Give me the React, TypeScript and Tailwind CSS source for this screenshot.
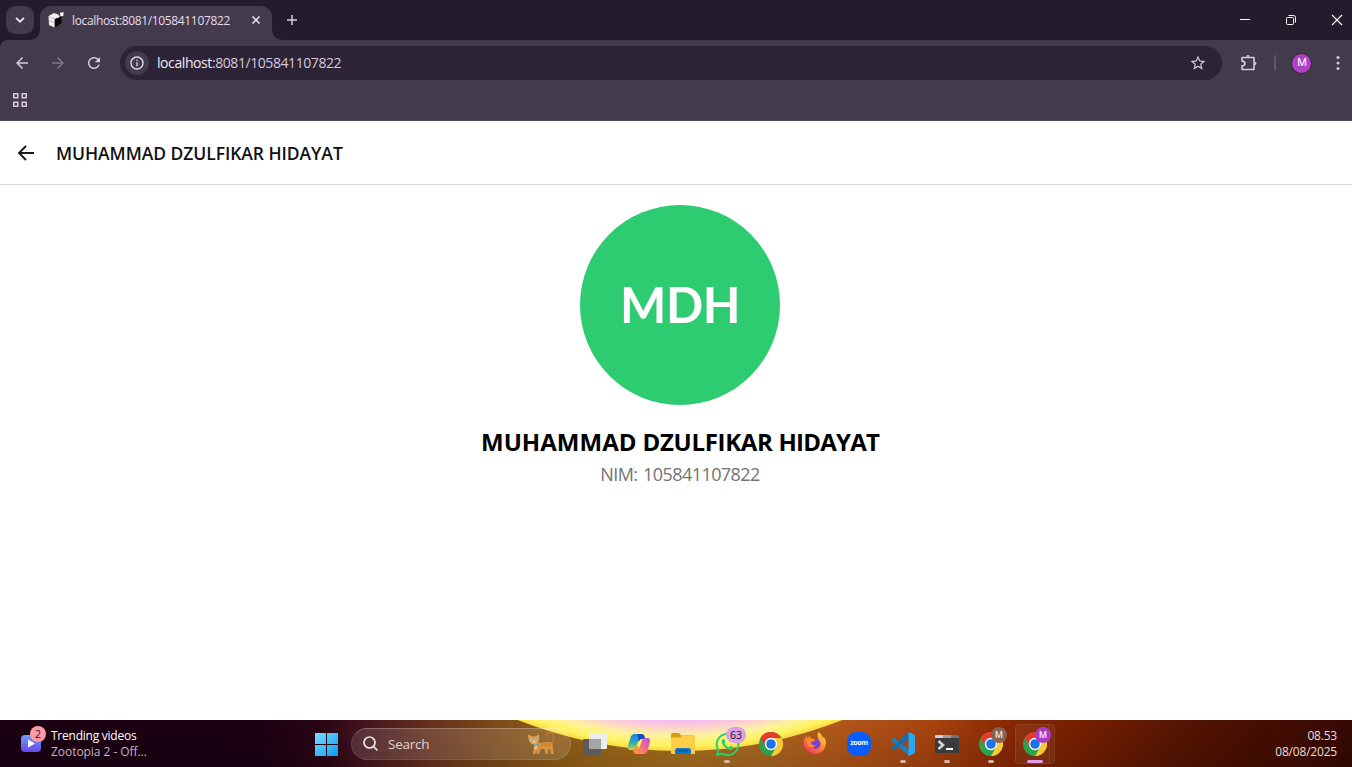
import type { ReactNode } from "react";
import { FaWhatsapp } from "react-icons/fa";
import { MdArrowBack, MdArrowForward, MdOutlineInfo, MdRefresh, MdStarBorder } from "react-icons/md";

function Favicon() {
  return (
    <svg width="16" height="16" viewBox="0 0 16 16">
      <path d="M0.500 4 6 1l4.500 1.500-.5 3-3 1.500-.5 8.500L1 13z" fill="#f1eef4" />
      <path d="M6.500 7.500 9.500 6l1.500-2.500L13.500 5v6L7 15.800z" fill="#08070a" />
      <path d="M0.800 4.500 6.500 6.800 10 5M6.500 6.800V15M1 8.500l5.500 2.300" stroke="#a39fa9" strokeWidth="0.600" fill="none" />
      <path d="M12 .8 15.500 0v3.500L12.500 4.500zM9 4l2.500-.8v2L9 6z" fill="#fff" />
    </svg>
  );
}

function TabStrip() {
  return (
    <div className="flex h-10 bg-[#241b2d] text-[#e6dcec]">
      <div className="flex w-8.5 justify-end pt-1.5">
        <button className="flex h-7 w-7 items-center justify-center rounded-[9px] bg-[#433a4b]">
          <svg width="10" height="6" viewBox="0 0 10 6" fill="none" stroke="#f0e8f5" strokeWidth="1.700"><path d="M1 .8 5 4.700 9 .8" /></svg>
        </button>
      </div>
      <div className="flex w-1.5 items-end">
        <svg className="-ml-1 shrink-0" width="10" height="10" viewBox="0 0 10 10"><path d="M10 0v10H0A10 10 0 0 0 10 0z" fill="#433a4b" /></svg>
      </div>
      <div className="mt-1.5 flex w-58 items-center rounded-t-[10px] bg-[#433a4b] pr-2.5 pb-1.5 pl-2">
        <Favicon />
        <span className="ml-2 flex-1 pt-px text-[12px] tracking-[-0.360px] whitespace-nowrap">localhost:8081/105841107822</span>
        <svg width="12" height="12" viewBox="0 0 12 12" stroke="#f0e8f5" strokeWidth="1.500"><path d="M2.500 2.500 9.500 9.500M9.500 2.500 2.500 9.500" /></svg>
      </div>
      <div className="flex items-end">
        <svg width="10" height="10" viewBox="0 0 10 10"><path d="M0 0v10h10A10 10 0 0 1 0 0z" fill="#433a4b" /></svg>
      </div>
      <div className="flex w-5 items-center justify-center">
        <svg width="12" height="12" viewBox="0 0 12 12" stroke="#d8c9e2" strokeWidth="1.500"><path d="M6 1v10M1 6h10" /></svg>
      </div>
      <div className="ml-auto flex items-center gap-[34px] pr-[9px] text-white">
        <svg width="12" height="12" viewBox="0 0 12 12" stroke="currentColor"><path d="M1 5.500h10" /></svg>
        <svg width="12" height="12" viewBox="0 0 12 12" fill="none" stroke="currentColor"><rect x="1.500" y="3.500" width="7" height="7" rx="1" /><path d="M3.500 1.500h5a2 2 0 0 1 2 2v5" /></svg>
        <svg width="12" height="12" viewBox="0 0 12 12" stroke="currentColor" strokeWidth="1.100"><path d="M1 1 11 11M11 1 1 11" /></svg>
      </div>
    </div>
  );
}

function Toolbar() {
  return (
    <div className="bg-[#241b2d]">
      <div className="flex h-[81px] flex-col rounded-tl-lg border-b border-[#52485a] bg-[#433a4b] pt-1.5">
        <div className="flex h-[34px] items-center text-[#d8c9e2]">
          <MdArrowBack className="ml-[13px] shrink-0" size={18} />
          <MdArrowForward className="ml-[18px] shrink-0 text-[#81768a]" size={18} />
          <MdRefresh className="ml-[18px] shrink-0" size={18} />
          <div className="ml-[17px] flex h-[34px] w-[1102px] items-center rounded-full bg-[#2c2336] px-[5px]">
            <div className="flex h-6 w-6 items-center justify-center rounded-full bg-[#433a4b]">
              <MdOutlineInfo className="text-[#e6dcec]" size={16} />
            </div>
            <span className="ml-2 text-[14px] leading-5 tracking-[-0.420px] text-[#d5c8de]"><span className="text-[#f1e9f6]">localhost</span>:8081/105841107822</span>
            <MdStarBorder className="mr-[10px] ml-auto" size={18} />
          </div>
          <svg className="ml-[18px]" width="18" height="18" viewBox="0 0 18 18" fill="none" stroke="currentColor" strokeWidth="1.600" strokeLinejoin="round">
            <path d="M2 3.500h12v12H2v-3.600q3-.2 3-2.400t-3-2.400z" />
            <path d="M6.300 2.800a1.700 1.700 0 0 1 3.400 0zM14.800 7.800a1.700 1.700 0 0 1 0 3.400z" fill="currentColor" stroke="none" />
          </svg>
          <div className="ml-4 h-4 w-0.5 rounded bg-[#61566a]" />
          <div className="ml-[15px] flex h-[21px] w-[21px] items-center justify-center rounded-full border border-[#2b2730] bg-[#b043c4] pt-px pl-px font-[Roboto] text-[11px] text-white">M</div>
          <svg className="ml-6" width="4" height="16" viewBox="0 0 4 16" fill="currentColor"><circle cx="2" cy="2.500" r="1.500" /><circle cx="2" cy="8" r="1.500" /><circle cx="2" cy="13.500" r="1.500" /></svg>
        </div>
        <svg className="mt-3 ml-3" width="16" height="16" viewBox="0 0 16 16" fill="none" stroke="#d8c9e2" strokeWidth="1.500">
          <path d="M1.800 1.800h4v4h-4zM10.200 1.800h4v4h-4zM1.800 10.200h4v4h-4zM10.200 10.200h4v4h-4z" />
        </svg>
      </div>
    </div>
  );
}

function ProfilePage() {
  return (
    <div className="flex flex-1 flex-col bg-white">
      <header className="flex h-16 items-center border-b border-[#d8d8d8] pl-4">
        <svg width="20" height="20" viewBox="0 0 20 20" fill="none" stroke="#18181a" strokeWidth="1.900"><path d="M18 10H3M10 3 3 10l7 7" /></svg>
        <h1 className="ml-5 text-[17.500px] leading-6 font-semibold tracking-[-0.060px] text-[#101012]">MUHAMMAD DZULFIKAR HIDAYAT</h1>
      </header>
      <main className="flex flex-col items-center pt-5 pl-2">
        <div className="flex h-50 w-50 items-center justify-center rounded-full bg-[#2ecc71] pb-0.5 font-[Lato] text-[49px] leading-none font-bold tracking-[-0.500px] text-white">MDH</div>
        <h2 className="mt-[21px] text-[24px] leading-8 font-bold tracking-[-0.310px] whitespace-nowrap text-black"><span className="tracking-[0.050px]">MUHAMMAD</span> DZULFIKAR <span className="tracking-[-0.800px]">HIDAYAT</span></h2>
        <p className="mt-1 text-[18px] leading-6 tracking-[-0.570px] [word-spacing:1.500px] text-[#737373]">NIM: 105841107822</p>
      </main>
    </div>
  );
}

function ChromeIcon() {
  return (
    <svg width="24" height="24" viewBox="0 0 24 24">
      <circle cx="12" cy="12" r="12" fill="#2da24c" />
      <path d="M1.600 6A12 12 0 0 1 22.400 6H12A6 6 0 0 0 6.800 15z" fill="#e33b2e" />
      <path d="M22.400 6A12 12 0 0 1 12 24L17.200 15A6 6 0 0 0 12 6z" fill="#fcc934" />
      <circle cx="12" cy="12" r="6.200" fill="#fff" />
      <circle cx="12" cy="12" r="4.800" fill="#1a73e8" />
    </svg>
  );
}

function TaskViewIcon() {
  return (
    <svg width="24" height="24" viewBox="0 0 24 24">
      <rect x="0" y="7" width="18" height="16" rx="1" fill="#5b5b5d" />
      <rect x="6" y="1" width="18" height="16" rx="1" fill="#eeeeef" />
      <path d="M6 7h12v10H7a1 1 0 0 1-1-1z" fill="#a5a5a7" />
    </svg>
  );
}

function CopilotIcon() {
  return (
    <svg width="24" height="24" viewBox="0 0 24 24">
      <defs>
        <linearGradient id="cpA" x1="0" y1="0" x2="0" y2="1"><stop stopColor="#1687e0" /><stop offset=".5" stopColor="#25a9c0" /><stop offset=".8" stopColor="#7fc36a" /><stop offset="1" stopColor="#f0d334" /></linearGradient>
        <linearGradient id="cpB" x1="1" y1="0" x2="0" y2="1"><stop stopColor="#a45fe8" /><stop offset=".45" stopColor="#f0619a" /><stop offset="1" stopColor="#ffa03c" /></linearGradient>
      </defs>
      <path d="M7.500 2H14L9 15.500q-.8 2.500-3 2.500H3.500C1 18 .6 16 1.200 13.500L3.500 5.500C4.200 3.200 5.500 2 7.500 2z" fill="url(#cpA)" />
      <path d="M10 2h4.500c2 0 2.700 1.300 3.200 3l.5 2h-3c-2 0-2.700 1-3.300 3z" fill="#1a49c0" />
      <path d="M16.500 22H10L15 8.500Q15.800 6 18 6h2.500c2.500 0 2.900 2 2.300 4.500l-2.300 8C19.800 20.800 18.500 22 16.500 22z" fill="url(#cpB)" />
      <path d="M14 22H9.500c-2 0-2.700-1.300-3.200-3l-.5-1.500q2.700 0 3.500-2.500L10 13z" fill="#ff8747" />
    </svg>
  );
}

function FolderIcon() {
  return (
    <svg width="24" height="24" viewBox="0 0 24 24">
      <path d="M0 2.500Q0 1 1.500 1H8l2 2.500H23q1 0 1 1v6H0z" fill="#d89a17" />
      <path d="M0 6q0-.6.600-.6H9l2-1.400h12q1 0 1 1V21q0 1-1 1H1q-1 0-1-1z" fill="#ffce48" />
      <path d="M4 22v-3.500Q4 16 6.500 16h11q2.500 0 2.500 2.500V22z" fill="#0878cf" />
      <path d="M7 18.700h10" stroke="#064b91" strokeWidth="1.200" />
    </svg>
  );
}

function FirefoxIcon() {
  return (
    <svg width="24" height="24" viewBox="0 0 24 24">
      <defs><linearGradient id="fox" x1="1" y1="0" x2=".2" y2="1"><stop stopColor="#ffe34d" /><stop offset=".45" stopColor="#ff972c" /><stop offset="1" stopColor="#f52d68" /></linearGradient></defs>
      <path d="M15.500 0c3 1.800 3.500 4 3.700 5l1.200 1.200-.1-2c2 2.200 2.800 4.800 2.700 7.600A11.200 11.200 0 0 1 .8 12.500C.5 8.500 1.800 5.500 3.500 3.500l.5 3 3.200-2.900v3l4 1 4.800-.6c-1.800-2-2-4.600-.5-7z" fill="url(#fox)" />
      <circle cx="12.500" cy="12" r="5" fill="#7542d9" />
      <path d="M3.500 7c3-2 7-.3 9 1.500-2 .4-3 1.500-4.800 1.800.4 2.400 2.300 3.700 5 3-1.500 3-6 3-8.200-.3z" fill="#ff8d25" />
    </svg>
  );
}

function CodeIcon() {
  return (
    <svg width="24" height="24" viewBox="0 0 24 24">
      <path d="M1 7.300 3 5.800l15 12V24L.8 8.500Q.3 7.900 1 7.300z" fill="#1681c6" />
      <path d="M1 16.700 3 18.200l15-12V0L.8 15.500Q.3 16.100 1 16.700z" fill="#0d71b8" />
      <path d="M17.500 0 23 2.500q1 .5 1 1.500v16q0 1-1 1.500L17.500 24z" fill="#30a5ed" />
    </svg>
  );
}

function TerminalIcon() {
  return (
    <svg width="24" height="24" viewBox="0 0 24 24">
      <path d="M0 4q0-1 1-1h22q1 0 1 1v16q0 1-1 1H1q-1 0-1-1z" fill="#3a3b3d" />
      <path d="M0 6V4q0-1 1-1h7v3z" fill="#d1d1d2" /><path d="M8 3h8v3H8z" fill="#9c9c9d" /><path d="M16 3h7q1 0 1 1v2h-8z" fill="#707173" />
      <path d="m3.500 9 4.500 4-4.500 4" fill="none" stroke="#d8d8d9" strokeWidth="2.600" /><path d="M11 17h7" stroke="#fff" strokeWidth="2" />
    </svg>
  );
}

function Cat() {
  return (
    <svg width="29" height="25" viewBox="0 0 29 25">
      <path d="M23.500 14c3.500-2.500 3.500-6 2.800-9Q25 1.200 22 1.500q-3 .5-2.500 3.500" fill="none" stroke="#bd762a" strokeWidth="1.800" strokeLinecap="round" />
      <path d="M8 11q6 1.500 11 0 5-1 6.500 1.500l.5 5.500 1 5h-3l-1-5-2 1 .5 4h-3l-1-5h-4l-1 5h-3l.5-4-1.500 4H5.500L7 17z" fill="#d9903f" />
      <path d="m.8 3.500 3.700 1.800h4.500l3-2.300v6q-.5 4-5 4.300Q2.500 13 1.800 9z" fill="#dfa052" />
      <path d="m7 13 3.500 1-1 5-2-1z" fill="#efc58e" />
      <path d="M6.500 14q2.500.8 5-1" stroke="#35aab4" strokeWidth="1.300" fill="none" />
      <path d="M5.500 10h3l-1.500 2z" fill="#f7dfbc" />
      <circle cx="4.300" cy="8.500" r="1.300" fill="#78cbd2" /><circle cx="9" cy="8.200" r="1.200" fill="#78cbd2" />
      <path d="M15 12v3M18.500 12v3M22 12v4M6.500 5.300v1.500" stroke="#b76b28" strokeWidth=".9" />
    </svg>
  );
}

type Item = { id: string; icon: ReactNode; mark?: "dot" | "bar"; badge?: ReactNode };

const items: Item[] = [
  { id: "views", icon: <TaskViewIcon /> },
  { id: "copilot", icon: <CopilotIcon /> },
  { id: "files", icon: <FolderIcon /> },
  {
    id: "whatsapp", icon: <FaWhatsapp size={27} className="text-[#25d366]" />, mark: "dot",
    badge: <span className="absolute top-[7px] left-[21px] flex h-4 w-5 items-center justify-center rounded-full bg-[#d9a0e7] pt-px text-[10.500px] text-[#1c1020]">63</span>,
  },
  { id: "chrome", icon: <ChromeIcon /> },
  { id: "firefox", icon: <FirefoxIcon /> },
  { id: "zoom", icon: <div className="flex h-6 w-6 items-center justify-center rounded-[9px] bg-[#0b5cff] pb-0.5 text-[7px] font-bold tracking-[-0.400px] text-white">zoom</div> },
  { id: "code", icon: <CodeIcon />, mark: "dot" },
  { id: "terminal", icon: <TerminalIcon />, mark: "dot" },
  {
    id: "chrome-a", icon: <ChromeIcon />, mark: "dot",
    badge: <span className="absolute top-[7px] left-[22px] flex h-4 w-4 items-center justify-center rounded-full bg-[#856156] pt-px font-[Roboto] text-[9px] font-medium text-[#eee2de]">M</span>,
  },
  {
    id: "chrome-b", icon: <ChromeIcon />, mark: "bar",
    badge: <span className="absolute top-[7px] left-[22px] flex h-4 w-4 items-center justify-center rounded-full bg-[#a93fc0] pt-px font-[Roboto] text-[9px] font-medium text-[#f4e5f7]">M</span>,
  },
];

function TaskItem({ item }: { item: Item }) {
  return (
    <div className="relative flex h-[47px] w-11 items-center justify-center pt-px">
      {item.mark === "bar" && <div className="absolute top-1 left-0.5 h-10 w-10 rounded border border-white/8 bg-white/6" />}
      {item.mark === "bar" && <div className="absolute top-1 left-1 h-10 w-[33px] rounded border-r border-white/8" />}
      <div className="relative">{item.icon}</div>
      {item.badge}
      {item.mark === "dot" && <div className="absolute bottom-1 left-[19px] h-[3px] w-1.5 rounded-full bg-[#d5b5a3]" />}
      {item.mark === "bar" && <div className="absolute bottom-1 left-3.5 h-[3px] w-4 rounded-full bg-[#dda0e8]" />}
    </div>
  );
}

function Taskbar() {
  return (
    <footer className="relative flex h-[47px] items-center bg-[linear-gradient(90deg,#1b0012_0px,#1c0012_260px,#2b0615_325px,#3d0e1c_350px,#67311d_430px,#835018_510px,#996517_590px,#a97020_690px,#ac6620_770px,#b3571a_840px,#a8440f_930px,#8a2803_1010px,#741e00_1090px,#591602_1170px,#480e01_1250px,#360904_1352px)]">
      <svg className="absolute inset-0" width="1352" height="47">
        <defs>
          <radialGradient id="sun" gradientUnits="userSpaceOnUse" cx="680" cy="-410" r="441">
            <stop offset=".93" stopColor="#f9b8f4" /><stop offset=".947" stopColor="#fbd3cf" /><stop offset=".967" stopColor="#fdf39a" /><stop offset=".988" stopColor="#fff25c" /><stop offset="1" stopColor="#f8da44" />
          </radialGradient>
          <linearGradient id="shade" x1="0" x2="0" y1="0" y2="1"><stop stopColor="#000" stopOpacity="0" /><stop offset="1" stopColor="#000" stopOpacity=".14" /></linearGradient>
        </defs>
        <rect width="1352" height="47" fill="url(#shade)" />
        <circle cx="680" cy="-410" r="441" fill="url(#sun)" />
      </svg>
      <div className="relative flex w-[313px] items-center pl-5">
        <div className="relative h-[35px] w-[26px]">
          <svg className="absolute top-[9px] left-px" width="20" height="17" viewBox="0 0 20 17"><defs><linearGradient id="vid" x2="0" y2="1"><stop stopColor="#719bfb" /><stop offset="1" stopColor="#6748e8" /></linearGradient></defs><rect width="20" height="17" rx="4" fill="url(#vid)" /><path d="m7 4.500 7 4-7 4z" fill="#fff" /></svg>
          <span className="absolute top-0 left-2.5 flex h-4 w-4 items-center justify-center rounded-full bg-[#ff99a5] pt-px text-[10.500px] text-[#29151c]">2</span>
        </div>
        <div className="ml-[5px] pt-px text-[12px] leading-4 tracking-[-0.240px] whitespace-nowrap"><p className="text-white">Trending videos</p><p className="tracking-[-0.050px] text-[#c2b5bd]">Zootopia 2 - Off...</p></div>
      </div>
      <svg className="relative mt-0.5 ml-0.5" width="24" height="24" viewBox="0 0 24 24">
        <defs><linearGradient id="win" x2="1" y2="1"><stop stopColor="#78ddff" /><stop offset="1" stopColor="#079cf5" /></linearGradient></defs>
        <path d="M0 0h11v11H0zM12 0H23v11H12zM0 12h11v11H0zM12 12H23v11H12z" fill="url(#win)" />
      </svg>
      <div className="relative ml-3 flex h-8 w-[220px] items-center rounded-full border border-white/10 border-t-white/25 bg-white/13 px-2.5">
        <svg width="17" height="17" viewBox="0 0 17 17" fill="none" stroke="#eee6e9" strokeWidth="1.700"><circle cx="7.500" cy="7.500" r="5.500" /><path d="m11.500 11.500 3.500 3.500" strokeLinecap="round" /></svg>
        <span className="ml-[9px] pt-px text-[13.500px] tracking-[-0.250px] text-[#e0d2d0]">Search</span>
        <div className="mr-1 ml-auto"><Cat /></div>
      </div>
      <div className="relative ml-0.5 flex">{items.map((item) => <TaskItem key={item.id} item={item} />)}</div>
      <div className="relative ml-auto pt-px pr-[15px] text-right text-[12px] leading-4 tracking-[-0.200px] text-[#eadcd9]"><p>08.53</p><p>08/08/2025</p></div>
    </footer>
  );
}

export default function App() {
  return (
    <div className="flex h-[767px] w-[1352px] flex-col overflow-hidden font-['Open_Sans','Noto_Sans',sans-serif]">
      <TabStrip />
      <Toolbar />
      <ProfilePage />
      <Taskbar />
    </div>
  );
}
